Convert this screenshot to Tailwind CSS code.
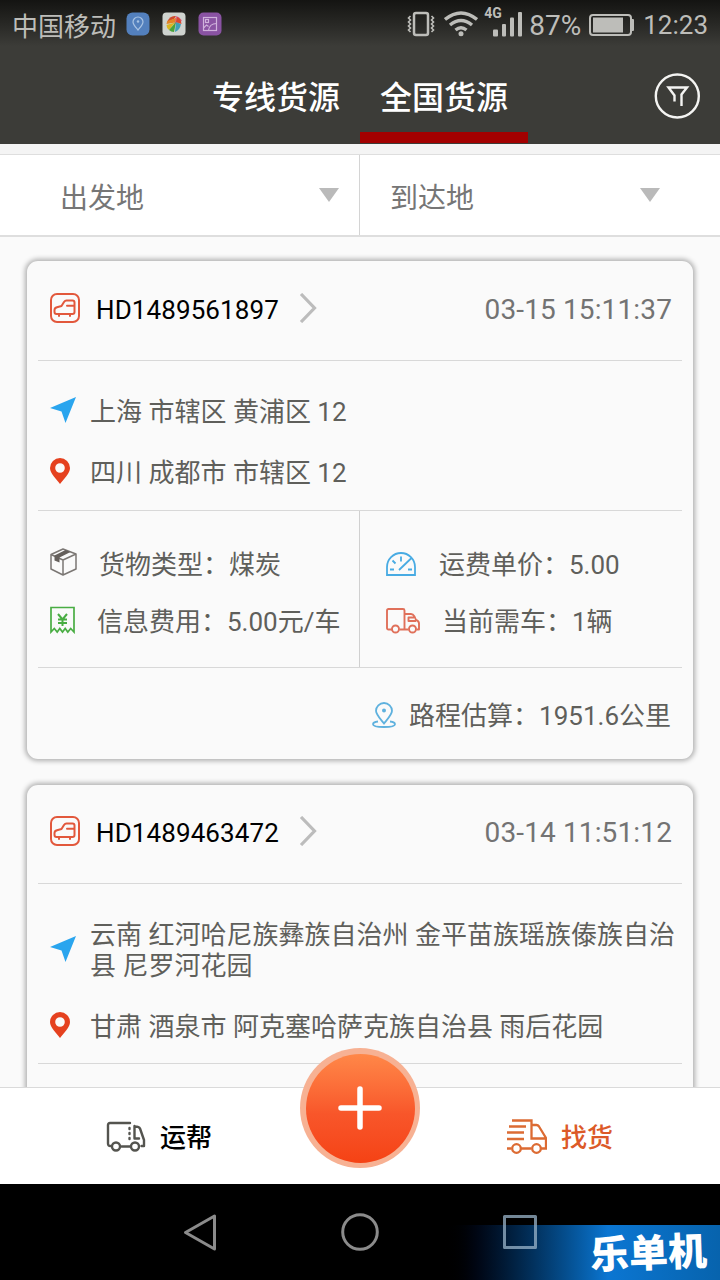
<!DOCTYPE html>
<html lang="zh-CN">
<head>
  <meta charset="UTF-8" />
  <meta name="viewport" content="width=device-width, initial-scale=1.0"/>
  <title>全国货源</title>
  <script src="https://cdn.jsdelivr.net/npm/@tailwindcss/browser@4"></script>
</head>
<body class="bg-black font-['Roboto','Noto_Sans_CJK_SC',sans-serif] text-[#5f5f5b]">

  <!-- icons used in more than one card -->
  <svg class="hidden">
    <symbol id="i-car" viewBox="0 0 30 30">
      <g fill="none" stroke="#e2583c" stroke-width="2" stroke-linejoin="round" stroke-linecap="round">
        <rect x="1" y="1" width="28" height="28" rx="6"/>
        <path d="M6.500 21h16q2 0 2-2V9.500q0-2-2-2h-6q-1.500 0-2.500 1.500l-2.500 4-4.500 1.300Q4.500 15 4.500 17v2q0 2 2 2zM17 12.800h7M9 21v2M20 21v2"/>
      </g>
    </symbol>
    <symbol id="i-chevron" viewBox="0 0 18 30">
      <path d="M2 1L15.500 15 2 29" fill="none" stroke="#bcbcbc" stroke-width="3.200"/>
    </symbol>
    <symbol id="i-arrow" viewBox="0 0 26 26">
      <path d="M26 0L15.500 26 11.500 14.500 0 11z" fill="#2aa5ee"/>
    </symbol>
    <symbol id="i-pin" viewBox="0 0 20 26">
      <path fill-rule="evenodd" d="M10 0a10 10 0 0 1 10 10c0 5-6 11-10 16C6 21 0 15 0 10A10 10 0 0 1 10 0zm0 5.200a4.800 4.800 0 1 0 0 9.600 4.800 4.800 0 0 0 0-9.600z" fill="#e5411f"/>
    </symbol>
  </svg>

  <div class="relative flex h-[1280px] w-[720px] flex-col overflow-hidden">

    <header class="h-[144px] shrink-0 bg-[#3c3c38] bg-linear-to-b from-[#141412] via-[#3c3c38] via-[32%] to-[#3c3c38]">
      <!-- status bar -->
      <div class="flex h-[50px] items-center pr-3 pl-3 text-[#bdbdb9]">
        <span class="pt-[3px] text-[26px] leading-[50px]">中国移动</span>
        <svg class="ml-[10px] size-6 -mt-[2px]" viewBox="0 0 24 24">
          <rect x="0.500" y="0.500" width="23" height="23" rx="6" fill="#5380bd"/>
          <path d="M12 18c-2.500-3-5-5.500-5-8a5 5 0 0 1 10 0c0 2.500-2.500 5-5 8z" fill="none" stroke="#a9c3e3" stroke-width="1.200"/>
          <circle cx="12" cy="9.500" r="1.200" fill="#a9c3e3"/>
        </svg>
        <svg class="ml-3 size-6 -mt-[2px]" viewBox="0 0 24 24">
          <rect x="0.500" y="0.500" width="23" height="23" rx="4" fill="#cfd3cf"/>
          <path d="M5 10Q8 3 14 4l-2 3z" fill="#cf4a2b"/>
          <path d="M14 4q4 1 6 5l-8 3z" fill="#d5698f"/>
          <path d="M4.500 12l.8-3L14 6l-1 4.500z" fill="#e28425"/>
          <path d="M4.500 13l8.500-2.500L7 18q-2.500-2-2.500-5z" fill="#d9b522"/>
          <path d="M14 10l-2 10q-3 0-5-2z" fill="#49a338"/>
          <path d="M14 10l5 2q-1 6-6 8z" fill="#3f9fb8"/>
          <path d="M14 10l1-5q4 1 4.500 7z" fill="#d9472f"/>
        </svg>
        <svg class="ml-3 size-6 -mt-[2px]" viewBox="0 0 24 24">
          <rect x="0.500" y="0.500" width="23" height="23" rx="5" fill="#8a53a3"/>
          <g fill="none" stroke="#d0b2dc" stroke-width="1.200">
            <rect x="5.500" y="5.500" width="13" height="13"/>
            <rect x="7.500" y="7.500" width="3" height="3"/>
            <path d="M5.500 16l3-3 2 1.500M10.500 18.500q1-7 8-7"/>
          </g>
        </svg>

        <div class="ml-auto flex items-center">
          <svg class="h-[26px] w-[28px] -mt-[2px] -translate-x-px" viewBox="0 0 28 26" fill="none" stroke="currentColor">
            <rect x="7" y="2" width="14" height="22" rx="2" stroke-width="2.500"/>
            <path d="M3.500 5L1.500 7l2 2-2 2 2 2-2 2 2 2-2 2 2 2M24.500 5l2 2-2 2 2 2-2 2 2 2-2 2 2 2-2 2" stroke-width="1.600"/>
          </svg>
          <svg class="ml-[9px] h-[26px] w-[34px] -mt-[2px] -translate-x-px" viewBox="0 0 34 26" fill="none" stroke="currentColor" stroke-width="3.400">
            <path d="M1 8.500Q17-4.500 33 8.500M6 14q11-9 22 0M11.500 19Q17 14.500 22.500 19"/>
            <circle cx="17" cy="22.800" r="2.500" fill="currentColor" stroke="none"/>
          </svg>
          <div class="relative ml-[15px] h-[26px] w-[30px]">
            <span class="absolute -top-[6px] -left-[10px] text-[14px] leading-[14px] font-bold">4G</span>
            <svg class="absolute inset-0 h-[26px] w-[30px] -translate-x-px" viewBox="0 0 30 26" fill="currentColor">
              <rect x="0" y="17.500" width="5" height="7" rx="1"/>
              <rect x="9" y="12" width="4" height="12.500" rx="1"/>
              <rect x="17" y="5.500" width="4" height="19" rx="1"/>
              <rect x="25" y="0" width="4" height="24.500" rx="1"/>
            </svg>
          </div>
          <span class="ml-[5px] pt-px text-[28px] leading-[50px]">87%</span>
          <svg class="ml-[8px] h-[22px] w-[46px]" viewBox="0 0 46 22">
            <rect x="1" y="1" width="41" height="20" rx="3" fill="none" stroke="currentColor" stroke-width="2"/>
            <rect x="4" y="3.500" width="30" height="15" fill="currentColor"/>
            <rect x="42" y="5" width="3" height="12" rx="1" fill="currentColor"/>
          </svg>
          <span class="ml-[8px] text-[26px] leading-[50px]">12:23</span>
        </div>
      </div>

      <!-- tabs -->
      <div class="flex h-[94px] pl-[192px] text-[32px] leading-[97px] font-medium text-white">
        <div class="w-[168px] text-center">专线货源</div>
        <div class="flex w-[168px] flex-col text-center">
          <div class="h-[82px]">全国货源</div>
          <div class="h-[11px] bg-[#a30000]"></div>
        </div>
        <svg class="mt-[23px] ml-[126px] size-[46px]" viewBox="0 0 46 46" fill="none" stroke="#f4f4f2">
          <circle cx="23.300" cy="23" r="21.500" stroke-width="2.400"/>
          <path d="M20.500 28.500V22.500L14.500 14.500H33L27.500 21.500V33" stroke-width="2.400"/>
        </svg>
      </div>
    </header>

    <div class="h-[10px] shrink-0 bg-[#f4f4f4]"></div>

    <!-- origin / destination filters -->
    <div class="flex h-[83px] shrink-0 border-t border-b-2 border-[#dedede] bg-white text-[28px] text-[#767676]">
      <div class="flex w-[360px] items-center justify-between border-r border-[#d4d4d4] pr-[20px] pl-[60px]">
        <span class="pt-[7px]">出发地</span>
        <svg class="h-[14px] w-5 -mt-[1px]" viewBox="0 0 20 14"><path d="M0 0h20L10 14z" fill="#bababa"/></svg>
      </div>
      <div class="flex flex-1 items-center justify-between pr-[60px] pl-[30px]">
        <span class="pt-[7px]">到达地</span>
        <svg class="h-[14px] w-5 -mt-[1px]" viewBox="0 0 20 14"><path d="M0 0h20L10 14z" fill="#bababa"/></svg>
      </div>
    </div>

    <main class="h-[850px] shrink-0 overflow-hidden bg-[#fafafa] px-[27px] pt-6 text-[26px]">

      <section class="h-[498px] rounded-[11px] bg-[#fafafa] px-[11px] shadow-[0_0_5px_2px_rgba(0,0,0,0.3)]">
        <div class="flex h-[100px] items-center border-b border-[#d8d8d8] pr-[10px] pl-3">
          <svg class="size-[30px] -mt-[5px]"><use href="#i-car"/></svg>
          <span class="ml-4 tracking-[0.1px] text-black">HD1489561897</span>
          <svg class="ml-5 h-[30px] w-[18px] -mt-[5px]"><use href="#i-chevron"/></svg>
          <span class="-mt-[2px] ml-auto text-[28px] tracking-[0.13px] text-[#737373]">03-15 15:11:37</span>
        </div>
        <div class="flex flex-col gap-[30px] border-b border-[#d8d8d8] pt-[36px] pb-[21px] pl-3 leading-[31px]">
          <div class="flex items-center"><svg class="mr-[14px] size-[26px] -mt-[5px]"><use href="#i-arrow"/></svg>上海 市辖区 黄浦区 12</div>
          <div class="flex items-center"><svg class="mr-5 h-[26px] w-5 -mt-[5px]"><use href="#i-pin"/></svg>四川 成都市 市辖区 12</div>
        </div>
        <div class="flex h-[157px] border-b border-[#d8d8d8]">
          <div class="flex w-[322px] flex-col gap-[26px] border-r border-[#d0d0d0] pt-[39px] pl-3 leading-[31px]">
            <div class="flex items-center">
              <svg class="mr-[22px] h-7 w-[27px] -mt-[8px]" viewBox="0 0 27 28" fill="none" stroke="#7b7774" stroke-width="1.500" stroke-linejoin="round">
                <path d="M1 6.500L13 1l13 5v15l-13 6L1 21zM1 6.500l12 5.500 13-6M13 12v15"/>
                <path d="M4.500 7.500L15.500 2l5 2L9.500 9.500v5l-5-2z" fill="#65605c" stroke="none"/>
              </svg>
              货物类型：煤炭
            </div>
            <div class="flex items-center">
              <svg class="mr-[22px] h-[28px] w-[25px] -mt-[5px]" viewBox="0 0 25 28" fill="none" stroke="#49ad43" stroke-width="1.700">
                <path d="M1 26V1.500h23V26l-3.300-3.500-2.900 3.500-2.600-3.500-2.700 3.500-2.700-3.500L7.200 26l-2.900-3.500z"/>
                <path d="M8 8l4.500 5.500L17 8M12.500 13.500V20M8 13.500h9M8 17h9" stroke-width="2"/>
              </svg>
              信息费用：5.00元/车
            </div>
          </div>
          <div class="flex flex-1 flex-col gap-[26px] pt-[39px] pl-[26px] leading-[31px]">
            <div class="flex items-center">
              <svg class="mr-[23px] h-6 w-[30px] -mt-[4px]" viewBox="0 0 30 24" fill="none" stroke="#48abe3" stroke-width="1.800">
                <path d="M1 23V15a14 14 0 0 1 28 0v8zM13 18L25 6.500M15 4.500v5M6.500 8.500l3 3M4 17.500h4M22 17.500h4"/>
              </svg>
              运费单价：5.00
            </div>
            <div class="flex items-center">
              <svg class="mr-[22px] h-[26px] w-[34px] -mt-[4px]" viewBox="0 0 34 26" fill="none" stroke="#e0705a" stroke-width="1.900" stroke-linejoin="round">
                <path d="M6 21.500H2.500Q1 21.500 1 20V2.500q0-1.500 1.500-1.500H17q1.500 0 1.500 1.500v19H13.500M18.500 6H25q2 0 3.500 2.500L30 12q3 1 3 3.500v6h-2.500M22.500 21.500h-4M30 13h-7.500V9.500H28"/>
                <circle cx="9.500" cy="21" r="3.500"/><circle cx="26.500" cy="21" r="3.500"/>
              </svg>
              当前需车：1辆
            </div>
          </div>
        </div>
        <div class="flex h-[90px] items-center justify-end pt-[7px] pr-[11px]">
          <svg class="mr-[13px] h-[26px] w-6 -mt-[4px]" viewBox="0 0 24 26" fill="none" stroke="#5eb1de" stroke-width="1.800">
            <path d="M12 21.500C8 16.500 4 12.500 4 8.800a8 7.800 0 0 1 16 0c0 3.700-4 7.700-8 12.700zM6 19.500c-3.500.5-5 1.500-5 2.700C1 24 5 25 12 25s11-1 11-2.800c0-1.200-1.500-2.200-5-2.700"/>
            <circle cx="12" cy="8.500" r="2" fill="#5eb1de" stroke="none"/>
          </svg>
          路程估算：1951.6公里
        </div>
      </section>

      <section class="mt-[26px] h-[400px] rounded-[11px] bg-[#fafafa] px-[11px] shadow-[0_0_5px_2px_rgba(0,0,0,0.3)]">
        <div class="flex h-[99px] items-center border-b border-[#d8d8d8] pr-[10px] pl-3">
          <svg class="size-[30px] -mt-[6px]"><use href="#i-car"/></svg>
          <span class="-mt-px ml-4 tracking-[0.1px] text-black">HD1489463472</span>
          <svg class="ml-5 h-[30px] w-[18px] -mt-[6px]"><use href="#i-chevron"/></svg>
          <span class="-mt-[3px] ml-auto text-[28px] tracking-[0.13px] text-[#737373]">03-14 11:51:12</span>
        </div>
        <div class="flex flex-col gap-[30px] border-b border-[#d8d8d8] pt-[36px] pb-[20px] pl-3 leading-[31px]">
          <div class="flex items-center"><svg class="mr-[14px] size-[26px] shrink-0 -mt-[5px]"><use href="#i-arrow"/></svg><span>云南 红河哈尼族彝族自治州 金平苗族瑶族傣族自治县 尼罗河花园</span></div>
          <div class="flex items-center"><svg class="mr-5 h-[26px] w-5 -mt-[5px]"><use href="#i-pin"/></svg>甘肃 酒泉市 阿克塞哈萨克族自治县 雨后花园</div>
        </div>
        <div class="h-[157px] w-[322px] border-r border-[#d0d0d0]"></div>
      </section>
    </main>

    <!-- bottom navigation -->
    <nav class="relative flex h-[97px] shrink-0 items-center justify-between border-t border-[#dadada] bg-white pr-[107px] pl-[106px] text-[26px]">
      <div class="flex items-center font-medium text-black">
        <svg class="mr-[14px] h-[31px] w-10" viewBox="0 0 40 31" fill="none" stroke="#54544f" stroke-width="2.400" stroke-linecap="round" stroke-linejoin="round">
          <path d="M4.500 25Q2 25 2 22.500V4q0-2 2-2h20M15.500 25.500H24M29 5.500q4 0 5 2l4 11.500v6h-2.500M28.500 5v12.500H33"/>
          <path d="M23.500 7v11" stroke-dasharray="1 4"/>
          <circle cx="10" cy="25.500" r="4"/><circle cx="29" cy="25.500" r="4"/>
        </svg>
        <span class="pt-[4px]">运帮</span>
      </div>
      <div class="flex items-center text-[#dc5a28]">
        <svg class="mr-[14px] h-[35px] w-[41px]" viewBox="0 0 41 35" fill="none" stroke="#dc6b33" stroke-width="2.300">
          <path d="M6 1.500h19.500v18H39.500M25.500 6h5q1.500 0 2.500 1.500l7 11.500v10.500h-5M1 29.500h4.500M15 29.500h10.500M3 7.500h17M1 13.500h17M1 20h17"/>
          <circle cx="10.500" cy="29.500" r="4.300"/><circle cx="30.500" cy="29.500" r="4.300"/>
        </svg>
        <span class="pt-[4px] font-medium">找货</span>
      </div>
      <div class="absolute -top-[40px] left-[300px] flex size-[120px] items-center justify-center rounded-full bg-[#f7b193]">
        <div class="flex size-[109px] items-center justify-center rounded-full bg-linear-to-b from-[#ff8748] via-[#f8562a] via-55% to-[#f54214]">
          <svg class="size-11" viewBox="0 0 44 44"><path d="M22 3v38M3 22h38" stroke="#fff" stroke-width="5.500" stroke-linecap="round"/></svg>
        </div>
      </div>
    </nav>

    <!-- system keys -->
    <div class="relative h-24 shrink-0 bg-black">
      <div class="absolute right-0 bottom-0 flex h-[55px] w-[280px] items-center justify-end bg-linear-to-r from-black via-[#0b76d2] via-60% to-[#0763ad] pt-[3px] pr-[13px]">
        <span class="-rotate-2 text-[39px] leading-none font-black text-white">乐单机</span>
      </div>
      <div class="relative flex h-full items-center pl-[183px]">
        <svg class="h-[38px] w-[356px]" viewBox="0 0 356 38" fill="none" stroke="#8b8b8b" stroke-width="3" stroke-linejoin="round">
          <path d="M2.500 19.500L31.500 3v33z"/>
          <circle cx="177" cy="19" r="17.300"/>
          <rect x="321.500" y="3.500" width="31" height="31" stroke="#9ab4ca" stroke-opacity="0.750"/>
        </svg>
      </div>
    </div>
  </div>
</body>
</html>
